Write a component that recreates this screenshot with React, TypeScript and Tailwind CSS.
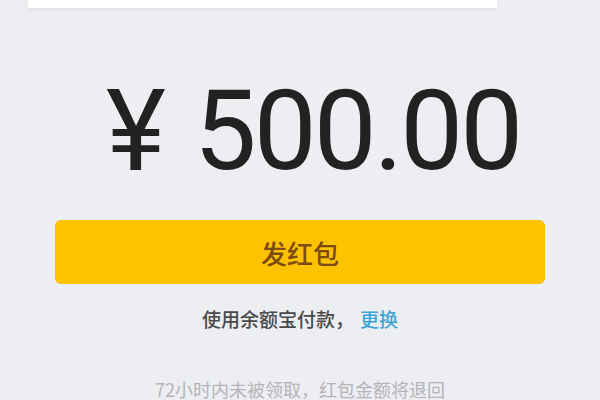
export default function App() {
  return (
    <div
      className="w-[600px] h-[400px] overflow-hidden bg-[#edeef2] flex flex-col items-center"
      style={{ fontFamily: '"Noto Sans CJK SC", Roboto, sans-serif' }}
    >
      {/* top card edge */}
      <div className="self-start ml-[28px] w-[469px] h-[8px] bg-white shadow-[0_2px_4px_rgba(0,0,0,0.06)] shrink-0" />

      {/* amount */}
      <div
        className="mt-[63px] ml-[26px] h-[120px] flex items-center text-[#222] font-normal leading-none"
        style={{ fontFamily: 'Roboto, "Noto Sans", sans-serif' }}
      >
        <span className="text-[114px] mr-[28px]">¥</span>
        <span className="text-[112px] tracking-[-3px]">500.00</span>
      </div>

      {/* send button */}
      <button className="mt-[29px] w-[490px] h-[64px] rounded-[6px] bg-[#fdc300] text-[#7c4a12] text-[26px] font-medium flex items-center justify-center shrink-0">
        发红包
      </button>

      {/* pay method */}
      <div className="mt-[25px] text-[19px] leading-none flex items-center font-medium">
        <span className="text-[#4a4a4a]">使用余额宝付款，</span>
        <span className="ml-[6px] text-[#3ba4d6]">更换</span>
      </div>

      {/* note */}
      <div className="mt-[52px] text-[18px] leading-none text-[#b4b4b8]">72小时内未被领取，红包金额将退回</div>
    </div>
  );
}
